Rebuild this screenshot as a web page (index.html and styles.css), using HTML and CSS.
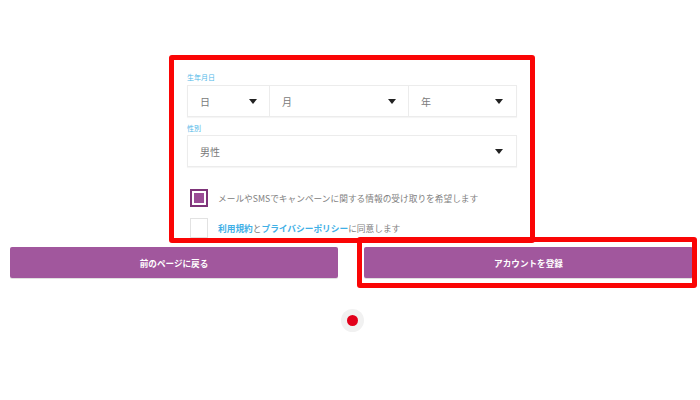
FILE: index.html
```html
<!DOCTYPE html>
<html lang="ja">
<head>
<meta charset="utf-8">
<link rel="stylesheet" href="styles.css">
</head>
<body>
<div class="page">
  <div class="form">
    <div class="label">生年月日</div>
    <div class="date-row">
      <div class="cell cell-day"><span>日</span><i class="arrow"></i></div>
      <div class="cell cell-month"><span>月</span><i class="arrow"></i></div>
      <div class="cell cell-year"><span>年</span><i class="arrow"></i></div>
    </div>
    <div class="label label-gender">性別</div>
    <div class="select"><span>男性</span><i class="arrow"></i></div>
    <div class="check check-first">
      <span class="box checked"><span class="fill"></span></span>
      <span class="check-text">メールやSMSでキャンペーンに関する情報の受け取りを希望します</span>
    </div>
    <div class="check check-second">
      <span class="box"></span>
      <span class="check-text"><a class="link">利用規約</a>と<a class="link">プライバシーポリシー</a>に同意します</span>
    </div>
  </div>
  <div class="buttons">
    <button class="btn btn-back">前のページに戻る</button>
    <button class="btn btn-submit">アカウントを登録</button>
  </div>
  <div class="loader"><span class="dot"></span></div>
</div>
<div class="mark mark-form"></div>
<div class="mark mark-submit"></div>
</body>
</html>
```
FILE: styles.css
```css
html, body {
  margin: 0;
  padding: 0;
  background: #ffffff;
}
body {
  width: 700px;
  height: 400px;
  position: relative;
  overflow: hidden;
  font-family: "Noto Sans CJK JP", "Noto Sans", sans-serif;
  color: #666666;
}
.page {
  padding-top: 72px;
}
.form {
  margin-left: 187px;
  width: 330px;
}
.label {
  font-size: 7px;
  line-height: 10px;
  height: 10px;
  color: #4fb8e8;
}
.label-gender {
  margin-top: 6px;
}
.date-row {
  margin-top: 3px;
  display: flex;
  height: 32px;
  box-sizing: border-box;
  border: 1px solid #ececec;
  box-shadow: 0 1px 1px rgba(0,0,0,0.04);
}
.cell, .select {
  display: flex;
  align-items: center;
  justify-content: space-between;
  box-sizing: border-box;
  padding: 0 12px 0 12px;
  font-size: 10px;
  color: #7a7a7a;
}
.cell-day { width: 81px; }
.cell-month { width: 139px; border-left: 1px solid #ececec; }
.cell-year { flex: 1; border-left: 1px solid #ececec; padding-right: 13px; }
.select {
  margin-top: 2px;
  height: 32px;
  border: 1px solid #ececec;
  box-shadow: 0 1px 1px rgba(0,0,0,0.04);
  padding-right: 13px;
}
.arrow {
  display: block;
  width: 0;
  height: 0;
  border-left: 4px solid transparent;
  border-right: 4px solid transparent;
  border-top: 5px solid #222222;
}
.check {
  display: flex;
  align-items: center;
  margin-left: 3px;
}
.check-first { margin-top: 22px; }
.check-second { margin-top: 11px; }
.box {
  width: 18px;
  height: 18px;
  box-sizing: border-box;
  border: 1px solid #e2e2e2;
  background: #ffffff;
  display: flex;
  align-items: center;
  justify-content: center;
  flex: none;
}
.box.checked {
  border: 2px solid #7e3479;
}
.fill {
  width: 10px;
  height: 10px;
  background: #9a4c96;
}
.check-second .box { height: 20px; }
.check-text {
  margin-left: 10px;
  font-size: 8.7px;
  color: #808080;
  white-space: nowrap;
}
.link {
  color: #3fb0e6;
  font-weight: bold;
}
.buttons {
  display: flex;
  gap: 26px;
  margin-top: 9px;
  padding-left: 10px;
}
.btn {
  height: 31px;
  border: none;
  border-radius: 2px;
  background: #a1579d;
  color: #ffffff;
  font-family: "Noto Sans CJK JP", "Noto Sans", sans-serif;
  font-size: 8.6px;
  font-weight: bold;
  padding: 0;
  box-shadow: 0 1px 0 rgba(0,0,0,0.12);
}
.btn-back { width: 328px; }
.btn-submit { width: 329px; }
.loader {
  margin: 31px 0 0 341px;
  width: 23px;
  height: 23px;
  border-radius: 50%;
  background: #f1f1f1;
  display: flex;
  align-items: center;
  justify-content: center;
}
.dot {
  width: 11px;
  height: 11px;
  border-radius: 50%;
  background: #e2001a;
}
.mark {
  position: absolute;
  box-sizing: border-box;
  border: 5px solid #fa0505;
  border-radius: 3px;
}
.mark-form {
  left: 169px;
  top: 55px;
  width: 366px;
  height: 188px;
}
.mark-submit {
  left: 357px;
  top: 237px;
  width: 340px;
  height: 51px;
}
```
